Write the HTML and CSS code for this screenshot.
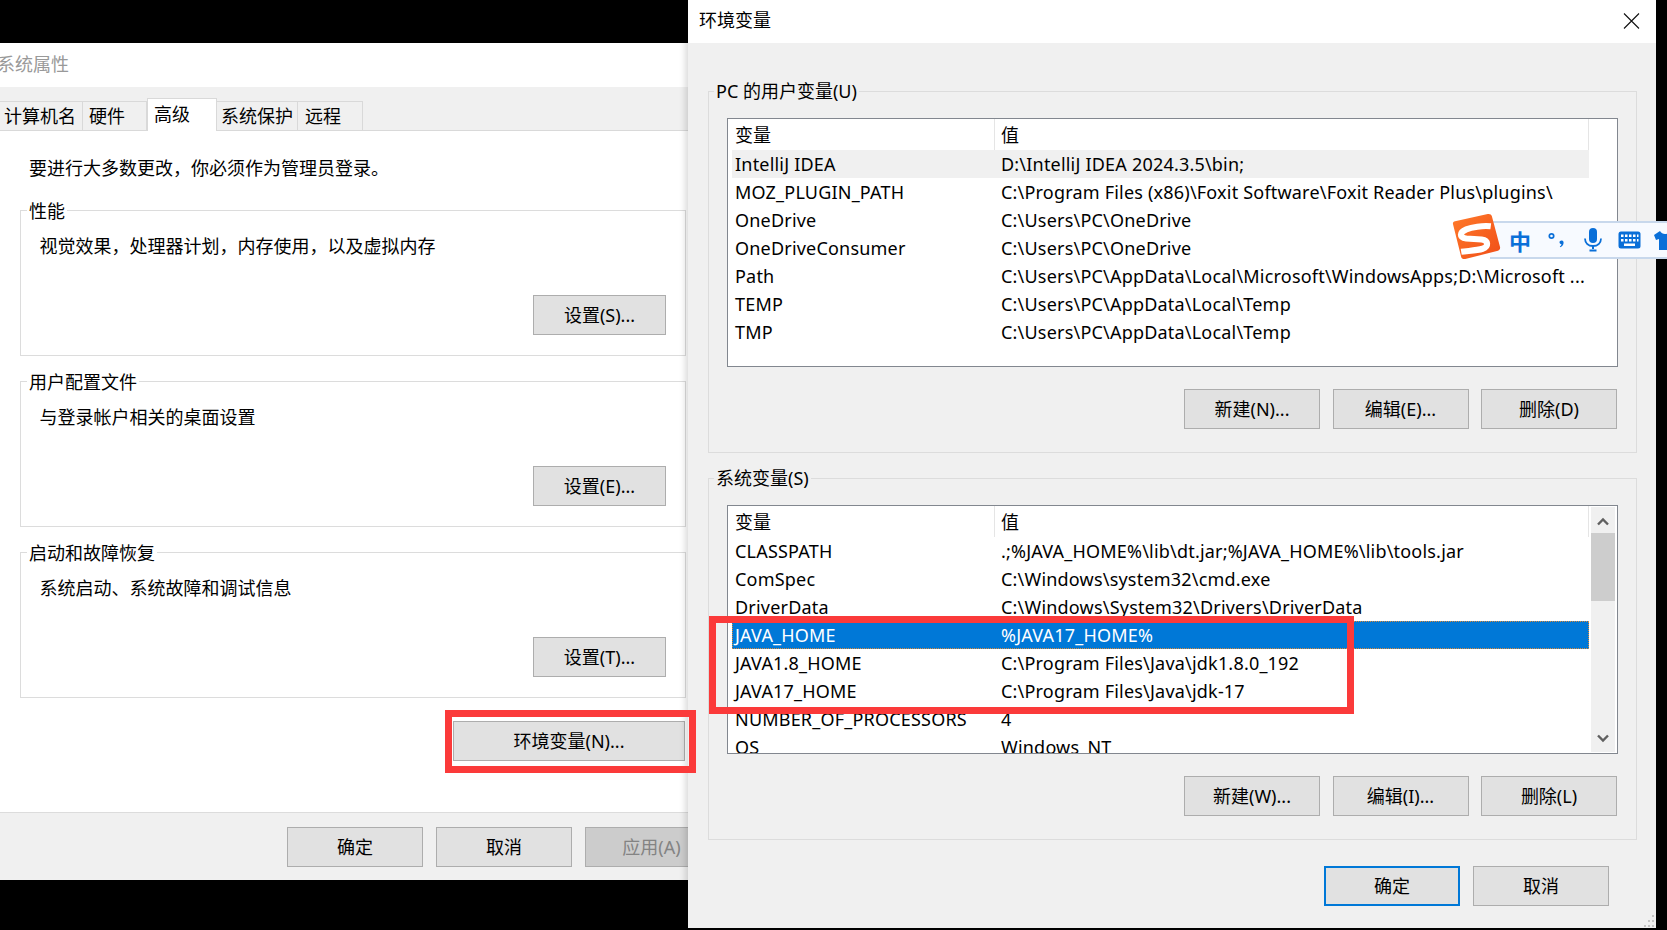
FILE: index.html
```html
<!DOCTYPE html>
<html lang="zh-CN">
<head>
<meta charset="utf-8">
<title>环境变量</title>
<link rel="stylesheet" href="styles.css">
</head>
<body>
<section class="win sys">
  <div class="sys-title">系统属性</div>
  <div class="tabs">
    <div class="tab t1">计算机名</div>
    <div class="tab t2">硬件</div>
    <div class="tab active">高级</div>
    <div class="tab t4">系统保护</div>
    <div class="tab t5">远程</div>
  </div>
  <div class="page">
    <p class="note">要进行大多数更改，你必须作为管理员登录。</p>
    <div class="group sgroup">
      <span class="legend">性能</span>
      <p class="desc">视觉效果，处理器计划，内存使用，以及虚拟内存</p>
      <button class="btn set">设置(S)...</button>
    </div>
    <div class="group sgroup">
      <span class="legend">用户配置文件</span>
      <p class="desc">与登录帐户相关的桌面设置</p>
      <button class="btn set">设置(E)...</button>
    </div>
    <div class="group sgroup">
      <span class="legend">启动和故障恢复</span>
      <p class="desc">系统启动、系统故障和调试信息</p>
      <button class="btn set">设置(T)...</button>
    </div>
    <button class="btn envbtn">环境变量(N)...</button>
  </div>
  <div class="sys-foot">
    <button class="btn foot">确定</button>
    <button class="btn foot">取消</button>
    <button class="btn foot off">应用(A)</button>
  </div>
</section>

<section class="win env">
  <div class="env-title">
    <span>环境变量</span>
    <svg class="close" width="17" height="16" viewBox="0 0 17 16"><path d="M1 .5 16 15.500M16 .5 1 15.500" stroke="#111" stroke-width="1.1" fill="none"/></svg>
  </div>
  <div class="env-body">
    <div class="group egroup">
      <span class="legend">PC 的用户变量(U)</span>
      <div class="list">
        <div class="rows">
          <div class="row head"><span class="c1">变量</span><span class="c2">值</span></div>
          <div class="row hover"><span class="c1">IntelliJ IDEA</span><span class="c2">D:\IntelliJ IDEA 2024.3.5\bin;</span></div>
          <div class="row"><span class="c1">MOZ_PLUGIN_PATH</span><span class="c2">C:\Program Files (x86)\Foxit Software\Foxit Reader Plus\plugins\</span></div>
          <div class="row"><span class="c1">OneDrive</span><span class="c2">C:\Users\PC\OneDrive</span></div>
          <div class="row"><span class="c1">OneDriveConsumer</span><span class="c2">C:\Users\PC\OneDrive</span></div>
          <div class="row"><span class="c1">Path</span><span class="c2">C:\Users\PC\AppData\Local\Microsoft\WindowsApps;D:\Microsoft ...</span></div>
          <div class="row"><span class="c1">TEMP</span><span class="c2">C:\Users\PC\AppData\Local\Temp</span></div>
          <div class="row"><span class="c1">TMP</span><span class="c2">C:\Users\PC\AppData\Local\Temp</span></div>
        </div>
      </div>
      <div class="actions">
        <button class="btn act">新建(N)...</button>
        <button class="btn act">编辑(E)...</button>
        <button class="btn act">删除(D)</button>
      </div>
    </div>
    <div class="group egroup second">
      <span class="legend">系统变量(S)</span>
      <div class="list">
        <div class="rows">
          <div class="row head"><span class="c1">变量</span><span class="c2">值</span></div>
          <div class="row"><span class="c1">CLASSPATH</span><span class="c2">.;%JAVA_HOME%\lib\dt.jar;%JAVA_HOME%\lib\tools.jar</span></div>
          <div class="row"><span class="c1">ComSpec</span><span class="c2">C:\Windows\system32\cmd.exe</span></div>
          <div class="row"><span class="c1">DriverData</span><span class="c2">C:\Windows\System32\Drivers\DriverData</span></div>
          <div class="row selected"><span class="c1">JAVA_HOME</span><span class="c2">%JAVA17_HOME%</span></div>
          <div class="row"><span class="c1">JAVA1.8_HOME</span><span class="c2">C:\Program Files\Java\jdk1.8.0_192</span></div>
          <div class="row"><span class="c1">JAVA17_HOME</span><span class="c2">C:\Program Files\Java\jdk-17</span></div>
          <div class="row"><span class="c1">NUMBER_OF_PROCESSORS</span><span class="c2">4</span></div>
          <div class="row"><span class="c1">OS</span><span class="c2">Windows_NT</span></div>
        </div>
        <div class="scroll">
          <svg class="arrow" width="12" height="9" viewBox="0 0 12 9"><path d="M1 7.500 6 2.500l5 5" stroke="#606060" stroke-width="2.400" fill="none"/></svg>
          <div class="thumb"></div>
          <svg class="arrow down" width="12" height="9" viewBox="0 0 12 9"><path d="M1 1.500 6 6.500l5-5" stroke="#606060" stroke-width="2.400" fill="none"/></svg>
        </div>
      </div>
      <div class="actions">
        <button class="btn act">新建(W)...</button>
        <button class="btn act">编辑(I)...</button>
        <button class="btn act">删除(L)</button>
      </div>
    </div>
    <div class="env-foot">
      <button class="btn act primary">确定</button>
      <button class="btn act">取消</button>
    </div>
  </div>
  <svg class="grip" width="11" height="13" viewBox="0 0 11 13" fill="#c4c4c4"><rect x="8" y="0" width="2" height="2"/><rect x="4" y="5" width="2" height="2"/><rect x="8" y="5" width="2" height="2"/><rect x="0" y="10" width="2" height="2"/><rect x="4" y="10" width="2" height="2"/><rect x="8" y="10" width="2" height="2"/></svg>
</section>

<div class="mark mark-btn"></div>
<div class="mark mark-rows"></div>

<div class="ime">
  <div class="ime-bar">
    <span class="ime-zh">中</span>
    <svg class="ime-punct" width="18" height="18" viewBox="0 0 18 18"><circle cx="3.500" cy="5" r="2.200" fill="none" stroke="#0a6fd8" stroke-width="1.700"/><path d="M13.500 9.500c2.200 0 2.600 2.400 1.600 4.200-.6 1.100-1.600 2-2.800 2.500l-.5-.8c1-.6 1.600-1.400 1.700-2.200-1.200 0-2-.8-2-1.900s.9-1.800 2-1.800z" fill="#0a6fd8"/></svg>
    <svg class="ime-mic" width="18" height="24" viewBox="0 0 18 24"><rect x="5" y="0" width="8" height="15" rx="4" fill="#0a6fd8"/><path d="M1 10.500c0 4.600 3.400 7.500 8 7.500s8-2.900 8-7.500" fill="none" stroke="#0a6fd8" stroke-width="1.800"/><rect x="8" y="18" width="2" height="3" fill="#0a6fd8"/><rect x="5.500" y="21.500" width="7" height="2" fill="#0a6fd8"/></svg>
    <svg width="23" height="18" viewBox="0 0 23 18"><rect x=".5" y=".5" width="22" height="17" rx="2.500" fill="#0a6fd8"/><g fill="#fff"><rect x="3" y="3.500" width="2.500" height="2.500"/><rect x="7" y="3.500" width="2.500" height="2.500"/><rect x="11" y="3.500" width="2.500" height="2.500"/><rect x="15" y="3.500" width="2.500" height="2.500"/><rect x="19" y="3.500" width="1.500" height="2.500"/><rect x="3" y="8" width="2.500" height="2.500"/><rect x="7" y="8" width="2.500" height="2.500"/><rect x="11" y="8" width="2.500" height="2.500"/><rect x="15" y="8" width="2.500" height="2.500"/><rect x="19" y="8" width="1.500" height="2.500"/><rect x="6" y="12.500" width="11" height="2.500"/></g></svg>
    <svg class="ime-shirt" width="22" height="19" viewBox="0 0 22 19"><path d="M6 0 0 4l2 5 3-1v11h12V8l3 1 2-5-6-4c-1 2-3 3-5 3S7 2 6 0z" fill="#0a6fd8"/></svg>
  </div>
  <svg class="ime-logo" width="48" height="46" viewBox="0 0 48 46">
    <defs><linearGradient id="sg" x1="0" y1="0" x2="1" y2="1"><stop offset="0" stop-color="#ff7a2a"/><stop offset="1" stop-color="#f04e18"/></linearGradient></defs>
    <path d="M3 8 35 1c2-.4 3.500.4 4 2l8 30c.5 2-.3 3.500-2 4L13 45c-2 .5-3.500-.3-4-2L1 11c-.4-1.500.4-2.700 2-3z" fill="url(#sg)"/>
    <path d="M38 13C30 12 19 14 14 16 7 19 7 24 14 25l15 1c7 1 7 7 1 9-6 2-15 2-21 3" fill="none" stroke="#fff" stroke-width="6"/>
  </svg>
</div>
</body>
</html>
```
FILE: styles.css
```css
* { box-sizing: border-box; }
html, body { margin: 0; height: 100%; }
body {
  background: #000;
  overflow: hidden;
  position: relative;
  font: 18px/24px "Noto Sans", "Noto Sans CJK SC", sans-serif;
  color: #000;
}
p { margin: 0; }

.win { position: absolute; display: flex; flex-direction: column; overflow: hidden; }
.sys { left: 0; top: 43px; width: 688px; height: 837px; background: #fff; }
.env { left: 688px; top: 0; width: 968px; height: 928px; background: #f0f0f0; overflow: visible; box-shadow: -3px 0 6px rgba(0,0,0,.14); }

.sys-title { height: 44px; line-height: 43px; margin-left: -3px; color: #999; flex: none; }

.tabs { height: 44px; flex: none; display: flex; align-items: flex-end; background: #f0f0f0; border-bottom: 1px solid #d9d9d9; }
.tab { height: 29px; line-height: 29px; border: 1px solid #d9d9d9; border-bottom: 0; border-left: 0; flex: none; }
.t1 { width: 83px; padding-left: 4px; }
.t2 { width: 64px; padding-left: 6px; }
.active { width: 70px; height: 33px; margin-bottom: -1px; padding-left: 6px; line-height: 31px; background: #fff; border-left: 1px solid #d9d9d9; }
.t4 { width: 81px; padding-left: 4px; }
.t5 { width: 65px; padding-left: 7px; }

.page { flex: 1; padding: 25px 0 0 20px; display: flex; flex-direction: column; align-items: flex-start; }
.note { margin-left: 9px; }

.group { position: relative; border: 1px solid #dcdcdc; display: flex; flex-direction: column; }
.legend { position: absolute; top: -12px; padding: 0 2px; background: inherit; white-space: nowrap; }
.sgroup { width: 666px; height: 146px; margin-bottom: 25px; padding: 23px 19px 0 18.500px; background: #fff; }
.sgroup:first-of-type { margin-top: 30px; }
.sgroup .legend { left: 6px; background: #fff; }
.desc { flex: none; }

.btn {
  display: block;
  flex: none;
  height: 40px;
  padding: 0;
  border: 1px solid #adadad;
  background: #e1e1e1;
  font: inherit;
  color: #000;
  text-align: center;
}
.set { width: 133px; margin-top: 37px; align-self: flex-end; }
.envbtn { width: 232px; margin: -2px 0 0 433px; }

.sys-foot { height: 68px; flex: none; display: flex; gap: 13px; padding: 14px 0 0 287px; background: #f0f0f0; border-top: 1px solid #dcdcdc; }
.foot { width: 136px; }
.off { width: 133px; background: #ccc; color: #838383; }

.env-title { height: 43px; flex: none; background: #fff; display: flex; align-items: center; justify-content: space-between; padding: 0 16px 3px 11px; }
.close { flex: none; margin-top: 2px; }
.env-body { flex: 1; padding: 48px 47px 0 20px; display: flex; flex-direction: column; }

.egroup { width: 929px; height: 362px; margin-right: -28px; padding: 26px 18px 0 18px; background: #f0f0f0; flex: none; }
.egroup .legend { left: 5px; top: -13px; background: #f0f0f0; }
.second { margin-top: 25px; }

.list { height: 249px; flex: none; background: #fff; border: 1px solid #82878f; display: flex; overflow: hidden; }
.rows { width: 857px; margin-left: 4px; flex: none; }
.row { display: flex; height: 28px; line-height: 28px; white-space: nowrap; letter-spacing: .2px; }
.c1 { width: 262px; flex: none; padding-left: 3px; }
.c2 { flex: 1; padding-left: 7px; }
.head { height: 31px; line-height: 33px; letter-spacing: 0; }
.head .c1 { width: 263px; padding-left: 3px; border-right: 1px solid #e5e5e5; }
.head .c2 { padding-left: 6px; border-right: 1px solid #e5e5e5; }
.hover { background: #f0f0f0; }
.selected { background: #0078d7; color: #fff; outline: 1px dotted #d98a3c; outline-offset: -1px; }

.scroll { width: 24px; margin: 1px 0 1px 2px; flex: none; background: #f0f0f0; display: flex; flex-direction: column; align-items: center; }
.arrow { flex: none; margin-top: 10px; }
.thumb { width: 24px; height: 68px; margin-top: 7px; background: #cdcdcd; flex: none; }
.down { margin-top: auto; margin-bottom: 9px; }

.actions { display: flex; justify-content: flex-end; gap: 12.500px; margin-top: 22px; padding-right: 1px; }
.act { width: 136px; }
.env-foot { display: flex; justify-content: flex-end; gap: 13px; margin-top: 26px; }
.primary { border: 2px solid #0078d7; }
.grip { position: absolute; right: 1px; bottom: 0; }

.mark { position: absolute; border: 7px solid #fb3a3a; }
.mark-btn { left: 445px; top: 710px; width: 251px; height: 63px; }
.mark-rows { left: 709px; top: 616px; width: 645px; height: 98px; }

.ime { position: absolute; left: 1452px; top: 213px; width: 215px; height: 47px; }
.ime-bar {
  position: absolute; left: 38px; top: 8px; width: 190px; height: 38px;
  background: #f7faff;
  border: 1px solid #c8d8ec; border-width: 2px 0;
  display: flex; align-items: center; gap: 16px;
  padding-left: 19px;
}
.ime-zh { font: 700 22px/24px "Noto Sans CJK SC", sans-serif; color: #0a6fd8; width: 22px; margin-right: 1px; }
.ime-mic { margin-left: 2px; }
.ime-shirt { margin-left: -3px; }
.ime-logo { position: absolute; left: 0; top: 0; width: 49px; height: 47px; }
```
